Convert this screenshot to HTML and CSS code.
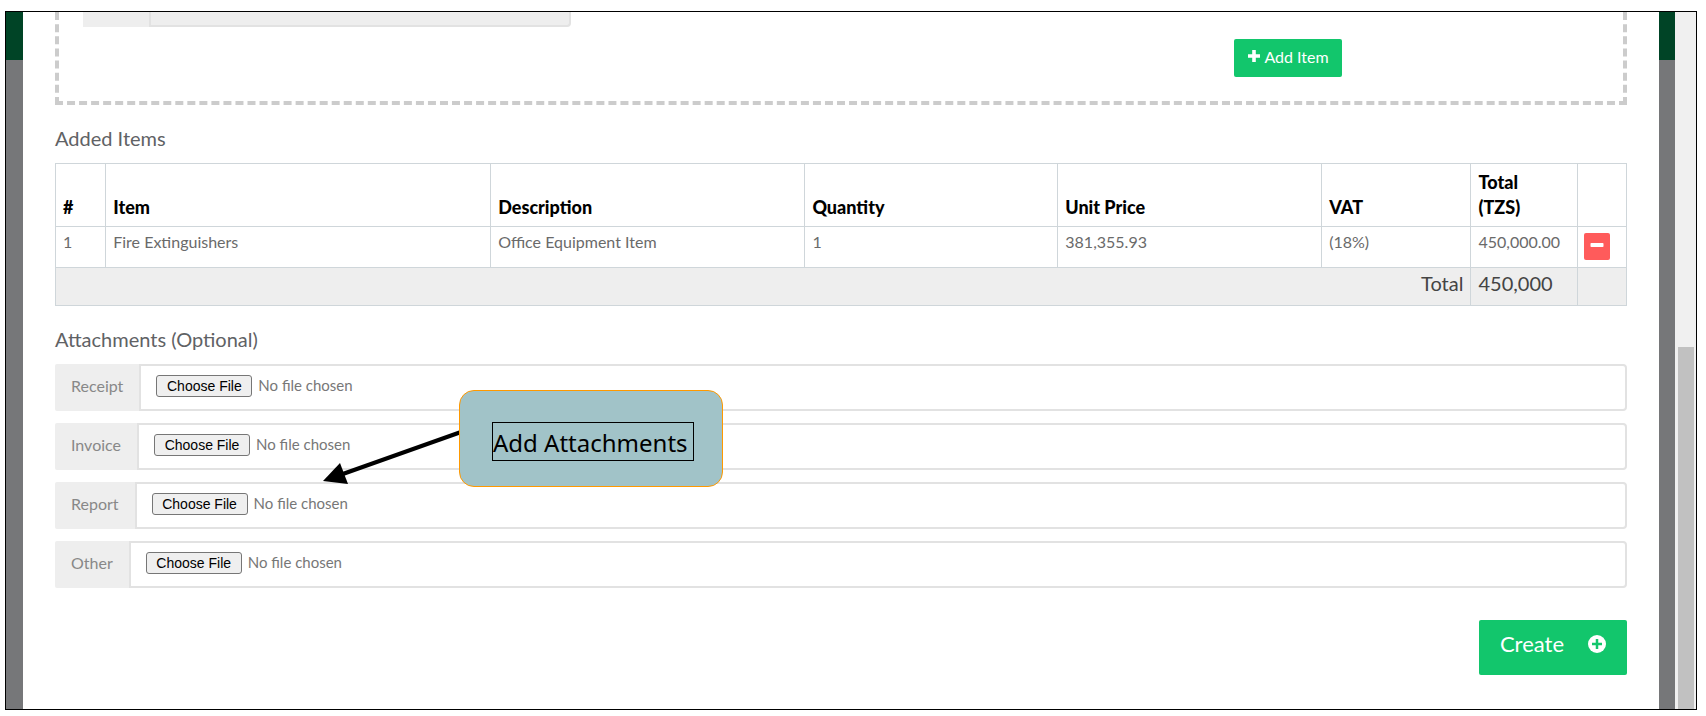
FILE: index.html
```html
<!DOCTYPE html>
<html lang="en">
<head>
  <meta charset="UTF-8">
  <meta name="viewport" content="width=device-width, initial-scale=1.0">
  <title>Added Items</title>
  <link rel="stylesheet" href="styles.css">
</head>
<body>
  <div class="frame">
    <div class="backdrop">
      <main class="modal">
        <section class="item-form">
          <div class="field-end">
            <span class="field-label"></span>
            <input type="text" class="field-input" aria-label="Amount" disabled>
          </div>
          <div class="item-actions">
            <button type="button" class="btn btn-add">
              <svg class="icon" viewBox="0 0 14 14" width="14" height="14"><path d="M5.200 1h3.600v4.200H13v3.600H8.800V13H5.200V8.800H1V5.200h4.200z" fill="currentColor"/></svg>
              Add Item
            </button>
          </div>
        </section>

        <h2 class="title">Added Items</h2>
        <table class="items">
          <colgroup>
            <col class="col-num">
            <col class="col-item">
            <col class="col-desc">
            <col class="col-qty">
            <col class="col-price">
            <col class="col-vat">
            <col class="col-total">
            <col class="col-action">
          </colgroup>
          <thead>
            <tr>
              <th>#</th>
              <th>Item</th>
              <th>Description</th>
              <th>Quantity</th>
              <th>Unit Price</th>
              <th>VAT</th>
              <th>Total<br>(TZS)</th>
              <th></th>
            </tr>
          </thead>
          <tbody>
            <tr>
              <td>1</td>
              <td>Fire Extinguishers</td>
              <td>Office Equipment Item</td>
              <td>1</td>
              <td>381,355.93</td>
              <td>(18%)</td>
              <td>450,000.00</td>
              <td class="cell-action">
                <button type="button" class="btn btn-remove" aria-label="Remove item">
                  <svg class="icon" viewBox="0 0 14 14" width="14" height="14"><rect x="0.500" y="5" width="13" height="4" rx="0.800" fill="currentColor"/></svg>
                </button>
              </td>
            </tr>
          </tbody>
          <tfoot>
            <tr>
              <td colspan="6" class="sum-label">Total</td>
              <td>450,000</td>
              <td></td>
            </tr>
          </tfoot>
        </table>

        <h2 class="title">Attachments (Optional)</h2>
        <div class="attachments">
          <div class="file-row">
            <label for="receipt">Receipt</label>
            <input type="file" id="receipt">
          </div>
          <div class="file-row">
            <label for="invoice">Invoice</label>
            <input type="file" id="invoice">
          </div>
          <div class="file-row">
            <label for="report">Report</label>
            <input type="file" id="report">
          </div>
          <div class="file-row">
            <label for="other">Other</label>
            <input type="file" id="other">
          </div>
          <!-- callout over the file fields -->
          <svg class="arrow" viewBox="0 0 140 62" width="140" height="62">
            <path d="M139 9L18 52" stroke="#000" stroke-width="4"/>
            <path d="M1 58L18 40L26 61z" fill="#000"/>
          </svg>
          <div class="callout"><span>Add Attachments</span></div>
        </div>

        <div class="form-actions">
          <button type="submit" class="btn btn-create">
            Create
            <svg class="icon" viewBox="0 0 18 18" width="18" height="18"><circle cx="9" cy="9" r="9" fill="#fff"/><path d="M9 4v10M4 9h10" stroke="#12c66c" stroke-width="2.500"/></svg>
          </button>
        </div>
      </main>
    </div>
    <div class="scrollbar"><div class="thumb"></div></div>
  </div>
</body>
</html>
```
FILE: styles.css
```css
* {
  box-sizing: border-box;
  margin: 0;
  padding: 0;
}
body {
  display: flex;
  min-height: 100vh;
  padding: 11px 9px 6px 5px;
  background-color: #fff;
  color: #6a6a6a;
  font-family: Lato, "Open Sans", sans-serif;
  font-size: 16px;
  line-height: 24px;
}
.frame {
  display: flex;
  flex: 1;
  border: 1px solid #000;
}
.backdrop {
  flex: 1;
  padding: 0 16px 0 17px;
  background: linear-gradient(#004426 48px, #767779 48px);
}
.modal {
  height: 100%;
  padding: 0 32px;
  background-color: #fff;
}
.scrollbar {
  display: flex;
  flex-direction: column;
  justify-content: flex-end;
  width: 21px;
  padding: 0 2px 0 3px;
  background-color: #f0f0f0;
}
.thumb {
  height: 52%;
  background-color: #c1c1c1;
}

/* item form */
.item-form {
  height: 93px;
  border: 4px dashed #ccc;
  border-top: 0;
}
.field-end {
  display: flex;
  width: 488px;
  height: 15px;
  margin-left: 24px;
}
.field-end .field-label {
  width: 66px;
  background-color: #eee;
}
.field-end .field-input {
  flex: 1;
  width: 0;
  border: 2px solid #e2e2e2;
  border-top: 0;
  border-radius: 0 0 4px 0;
  background-color: #eee;
}
.item-actions {
  display: flex;
  justify-content: flex-end;
  margin-top: 12px;
  padding-right: 281px;
}
.btn {
  display: flex;
  align-items: center;
  justify-content: center;
  border: 0;
  border-radius: 2px;
  background-color: #12c66c;
  color: #fff;
  font-family: inherit;
}
.btn-add {
  gap: 3px;
  width: 108px;
  height: 38px;
  padding-bottom: 4px;
  font-size: 16px;
}

/* table */
.title {
  margin: 20px 0 12px;
  color: #5f6265;
  font-size: 20px;
  font-weight: 400;
  line-height: 26px;
}
.items {
  width: 100%;
  table-layout: fixed;
  border-collapse: collapse;
}
.items th,
.items td {
  padding: 3px 7px;
  border: 1px solid #cfd6da;
  text-align: left;
  vertical-align: top;
}
.items th {
  padding: 6px 7px;
  color: #000;
  font-size: 18px;
  font-weight: 900;
  line-height: 25px;
  vertical-align: bottom;
}
.items tfoot td {
  height: 38px;
  background-color: #eee;
  color: #444;
  font-size: 20px;
}
.items tfoot .sum-label {
  text-align: right;
}
.items .cell-action {
  height: 41px;
  padding: 6px 6px 0;
}
.btn-remove {
  width: 26px;
  height: 27px;
  padding-bottom: 3px;
  background-color: #ff5b5b;
}
.col-num { width: 3.2%; }
.col-item { width: 24.5%; }
.col-desc { width: 20%; }
.col-qty { width: 16.1%; }
.col-price { width: 16.8%; }
.col-vat { width: 9.5%; }
.col-total { width: 6.8%; }
.col-action { width: 3.1%; }

/* attachments */
.attachments {
  display: flex;
  flex-direction: column;
  gap: 12px;
  position: relative;
}
.file-row {
  display: flex;
  height: 47px;
}
.file-row label {
  padding: 10px 16px;
  border-radius: 2px 0 0 2px;
  background-color: #eee;
  color: #888;
}
.file-row input {
  flex: 1;
  min-width: 0;
  padding: 9px 15px;
  border: 2px solid #e2e2e2;
  border-radius: 0 4px 4px 0;
  color: #777;
  font-family: inherit;
  font-size: 15px;
}
.file-row input::file-selector-button {
  width: 96px;
  height: 22px;
  margin-right: 6px;
  border: 1px solid #767676;
  border-radius: 3px;
  background-color: #efefef;
  color: #000;
  font-family: "Liberation Sans", Arial, sans-serif;
  font-size: 14px;
}
.arrow {
  position: absolute;
  top: 59px;
  left: 267px;
}
.callout {
  position: absolute;
  top: 26px;
  left: 404px;
  padding: 31px 28px 25px 32px;
  border: 1px solid #f90;
  border-radius: 15px;
  background-color: #a1c3c8;
  color: #000;
  font-family: "Noto Sans", "Open Sans", sans-serif;
  font-size: 24px;
  line-height: 34px;
}
.callout span {
  display: block;
  width: 202px;
  padding-top: 3px;
  border: 1px solid #000;
  white-space: nowrap;
}

.form-actions {
  display: flex;
  justify-content: flex-end;
  margin-top: 32px;
}
.btn-create {
  gap: 24px;
  width: 148px;
  height: 55px;
  padding-bottom: 8px;
  font-size: 22px;
}
```
